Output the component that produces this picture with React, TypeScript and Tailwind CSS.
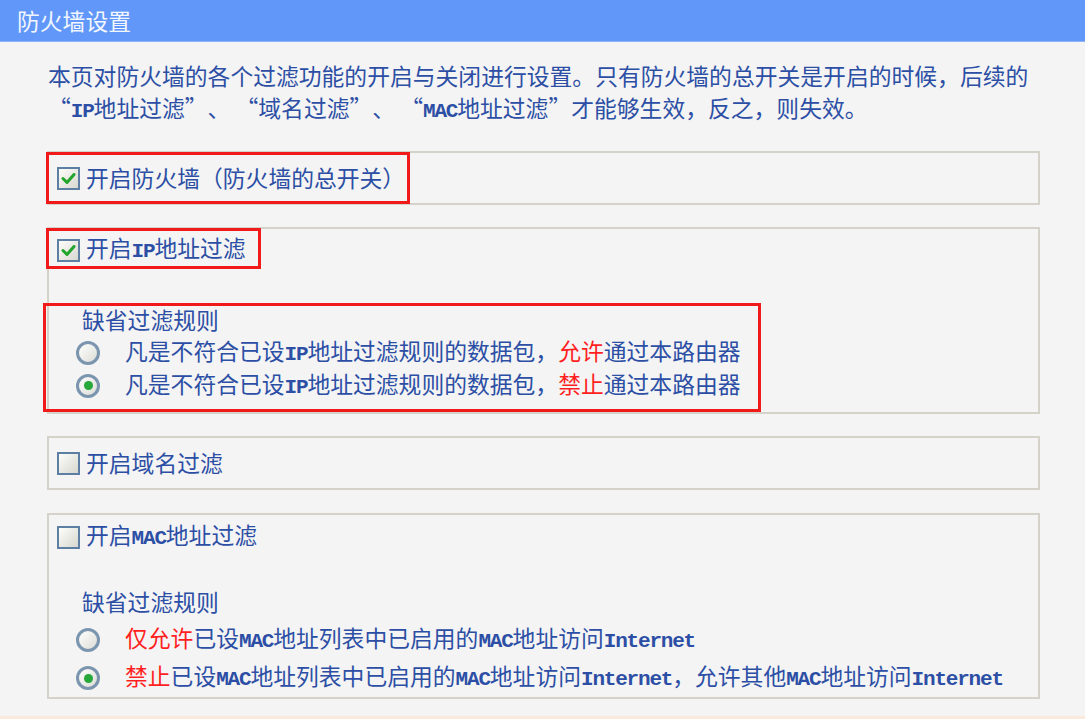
import React from 'react';

// latin runs in SimSun are half-width; squeeze mono to ~11.4px advance
const L: React.FC<{ children: React.ReactNode }> = ({ children }) => (
  <span className="font-['Liberation_Mono',monospace] text-[21px] font-bold tracking-[-1.2px]">{children}</span>
);

// full-width curly quotes
const Q: React.FC<{ close?: boolean }> = ({ close }) => (
  <span className={`inline-block w-[22.8px] ${close ? 'text-left' : 'text-right'}`}>{close ? '”' : '“'}</span>
);

const Red: React.FC<{ children: React.ReactNode }> = ({ children }) => (
  <span className="text-[#ff1f1f]">{children}</span>
);

const CheckBox: React.FC<{ checked?: boolean }> = ({ checked }) => (
  <span className="flex h-[23px] w-[23px] shrink-0 items-center justify-center border-2 border-[#5d7fa3] bg-gradient-to-br from-[#fdfdfb] to-[#d8d8d0]">
    {checked && (
      <svg width="15" height="13" viewBox="0 0 15 13">
        <path d="M2 6.5 L6 10.5 L13 2.5" fill="none" stroke="#21a52b" strokeWidth="3" strokeLinecap="round" strokeLinejoin="round" />
      </svg>
    )}
  </span>
);

const Radio: React.FC<{ checked?: boolean }> = ({ checked }) => (
  <span className="flex h-[24px] w-[24px] shrink-0 items-center justify-center rounded-full border-[3px] border-[#7b95ae] bg-gradient-to-br from-[#ffffff] to-[#dcdcd6]">
    {checked && <span className="h-[9px] w-[9px] rounded-full bg-[#26a83a]" />}
  </span>
);

const CheckRow: React.FC<{ checked?: boolean; children: React.ReactNode }> = ({ checked, children }) => (
  <div className="flex h-[32px] items-center gap-[6px] pl-[8px]">
    <CheckBox checked={checked} />
    <span>{children}</span>
  </div>
);

const RadioRow: React.FC<{ checked?: boolean; h: string; children: React.ReactNode }> = ({ checked, h, children }) => (
  <div className={`flex items-center pl-[27px] ${h}`}>
    <Radio checked={checked} />
    <span className="ml-[25px] whitespace-nowrap">{children}</span>
  </div>
);

export default function App() {
  return (
    <div className="flex h-[719px] w-[1085px] flex-col bg-[#f4f4f4] font-['Noto_Sans_CJK_SC',sans-serif] text-[22.8px] leading-[32px] text-[#2c4fa5]">
      {/* header */}
      <div className="flex h-[42px] shrink-0 items-center border-b border-[#8fb4fa] bg-[#6197f8] pl-[17px] text-[#f2f6ff]">
        防火墙设置
      </div>

      <div className="pl-[47px] pr-[45px]">
        <div className="mt-[18px] h-[64px] overflow-hidden pl-px">
          <div className="h-[32px] whitespace-nowrap">
            本页对防火墙的各个过滤功能的开启与关闭进行设置。只有防火墙的总开关是开启的时候，后续的
          </div>
          <div className="h-[32px] whitespace-nowrap">
            <Q /><L>IP</L>地址过滤<Q close />、 <Q />域名过滤<Q close />、 <Q /><L>MAC</L>地址过滤<Q close />才能够生效，反之，则失效。
          </div>
        </div>

        {/* master switch */}
        <div className="relative mt-[27px] flex h-[54px] items-center border-2 border-[#d5d2c9]">
          <CheckRow checked>开启防火墙（防火墙的总开关）</CheckRow>
          <div className="absolute left-[-3px] top-[-1px] h-[52px] w-[364px] border-[3px] border-[#f01a1a]" />
        </div>

        {/* ip filter */}
        <div className="relative mt-[22px] h-[187px] border-2 border-[#d5d2c9] pt-[5px]">
          <CheckRow checked>
            开启<L>IP</L>地址过滤
          </CheckRow>
          <div className="mt-[37px] flex h-[33px] items-center pl-[33px]">缺省过滤规则</div>
          <RadioRow h="h-[33px]">
            凡是不符合已设<L>IP</L>地址过滤规则的数据包，<Red>允许</Red>通过本路由器
          </RadioRow>
          <RadioRow h="h-[33px]" checked>
            凡是不符合已设<L>IP</L>地址过滤规则的数据包，<Red>禁止</Red>通过本路由器
          </RadioRow>
          <div className="absolute left-[-3px] top-[-1px] h-[41px] w-[215px] border-[3px] border-[#f01a1a]" />
          <div className="absolute left-[-6px] top-[74px] h-[109px] w-[718px] border-[3px] border-[#f01a1a]" />
        </div>

        {/* domain filter */}
        <div className="mt-[22px] flex h-[54px] items-center border-2 border-[#d5d2c9]">
          <CheckRow>开启域名过滤</CheckRow>
        </div>

        {/* mac filter */}
        <div className="mt-[23px] h-[186px] border-2 border-[#d5d2c9] pt-[6px]">
          <CheckRow>
            开启<L>MAC</L>地址过滤
          </CheckRow>
          <div className="mt-[32px] flex h-[33px] items-center pl-[33px]">缺省过滤规则</div>
          <RadioRow h="h-[38px] mt-[3px]">
            <Red>仅允许</Red>已设<L>MAC</L>地址列表中已启用的<L>MAC</L>地址访问<L>Internet</L>
          </RadioRow>
          <RadioRow h="h-[38px]" checked>
            <Red>禁止</Red>已设<L>MAC</L>地址列表中已启用的<L>MAC</L>地址访问<L>Internet</L>，允许其他<L>MAC</L>地址访问<L>Internet</L>
          </RadioRow>
        </div>
      </div>

      <div className="mt-auto h-[3px] bg-[#fbeadb]" />
    </div>
  );
}
